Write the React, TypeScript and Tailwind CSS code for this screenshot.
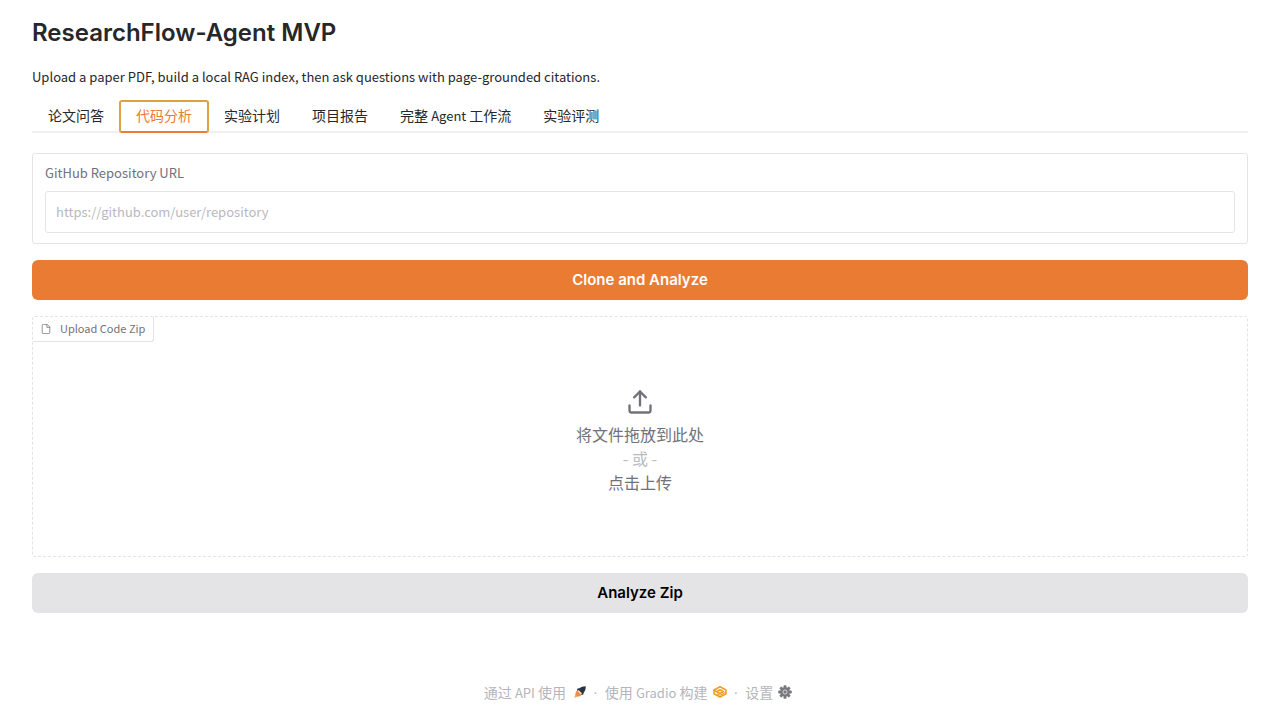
import React, { useState } from "react";

type Tab = { id: string; label: React.ReactNode };

const tabs: Tab[] = [
  { id: "qa", label: "论文问答" },
  { id: "code", label: "代码分析" },
  { id: "plan", label: "实验计划" },
  { id: "report", label: "项目报告" },
  {
    id: "workflow",
    label: (
      <>
        完整 <span className="text-[13px] leading-none">Agent</span> 工作流
      </>
    ),
  },
  { id: "eval", label: "实验评测" },
];

const FileIcon: React.FC = () => (
  <svg
    className="h-[10px] w-[10px]"
    viewBox="0 0 24 24"
    fill="none"
    stroke="currentColor"
    strokeWidth={1.8}
    strokeLinecap="round"
    strokeLinejoin="round"
  >
    <path d="M14 1H5a2 2 0 0 0-2 2v18a2 2 0 0 0 2 2h14a2 2 0 0 0 2-2V8z" />
    <path d="M14 1v7h7" />
  </svg>
);

const UploadIcon: React.FC = () => (
  <svg
    className="h-7 w-7"
    viewBox="0 0 24 24"
    fill="none"
    stroke="currentColor"
    strokeWidth={2}
    strokeLinecap="round"
    strokeLinejoin="round"
  >
    <path d="M21 15v4a2 2 0 0 1-2 2H5a2 2 0 0 1-2-2v-4" />
    <path d="M17 8l-5-5-5 5" />
    <path d="M12 3v12" />
  </svg>
);

const RocketIcon: React.FC = () => (
  <svg className="h-3 w-3" viewBox="0 0 24 24" fill="none">
    <path
      d="M23.500 0.500C18 0.500 13.500 2 11 4.500L7 5l-1 3.500 9.500 9.500 3-1 1-4c3-3 4-7 4-12.500z"
      fill="#283241"
    />
    <path d="M9.500 8.500L4 11l-3 12 12-3 2.500-5.500z" fill="#ee8a4c" />
    <path d="M9.500 8.500L7 10l7 7 1.500-2.500z" fill="#fbd9c4" />
    <path d="M1 23l1.500-6 4.500 4.500z" fill="#f6b45e" />
  </svg>
);

const GradioIcon: React.FC = () => (
  <svg
    className="h-[14px] w-[14px]"
    viewBox="0 0 28 28"
    fill="none"
    stroke="#f49b25"
    strokeWidth={3}
    strokeLinejoin="round"
  >
    <path d="M14 3.500L26 10v7.500L14 24 2 17.500V10z" />
    <path d="M2 10.500l12 6.500 7-3.800L14 9.500l-6 3.200" />
    <path d="M8 17.500l6 3 12-6.500" strokeWidth={2} />
  </svg>
);

const GearIcon: React.FC = () => (
  <svg className="h-[14px] w-[14px]" viewBox="0 0 24 24">
    <g fill="#77787c">
      {[0, 45, 90, 135].map((deg) => (
        <rect
          key={deg}
          x="9.500"
          y="0.500"
          width="5"
          height="23"
          rx="1"
          transform={`rotate(${deg} 12 12)`}
        />
      ))}
      <circle cx="12" cy="12" r="8" />
    </g>
    <circle cx="12" cy="12" r="3.500" fill="none" stroke="#dcdcde" strokeWidth={1.6} />
  </svg>
);

const App: React.FC = () => {
  const [active, setActive] = useState("code");
  const [url, setUrl] = useState("");

  return (
    <div className="flex min-h-screen flex-col bg-white px-8 font-['Noto_Sans_CJK_SC',sans-serif] text-sm text-[#27272a]">
      {/* Heading */}
      <h1 className="pt-4 font-['Inter',sans-serif] text-2xl leading-[34px] font-semibold">
        ResearchFlow-Agent MVP
      </h1>
      <p className="mt-4 text-[13px] leading-[21px]">
        Upload a paper PDF, build a local RAG index, then ask questions with
        page-grounded citations.
      </p>

      <main>
        {/* Tabs */}
        <div role="tablist" className="mt-[13px] flex border-b-2 border-[#f0f0f1]">
          {tabs.map((tab) => (
            <button
              key={tab.id}
              type="button"
              role="tab"
              aria-selected={active === tab.id}
              onClick={() => setActive(tab.id)}
              className={
                active === tab.id
                  ? "-mx-px -mb-[2px] h-[33px] rounded-[3px] border-2 border-[#dda13f] border-b-[#ed7a35] px-[15px] pb-[3px] text-[#ea7b33]"
                  : "h-[31px] px-4 pb-px"
              }
            >
              {tab.label}
            </button>
          ))}
        </div>

        <div className="mt-5 flex flex-col gap-4">
          {/* Repository */}
          <div className="rounded-[3px] border border-[#e4e4e7] px-3 pt-[9px] pb-[10px] text-[13px]">
            <label htmlFor="repo" className="mb-2 block leading-5 text-[#71717a]">
              GitHub Repository URL
            </label>
            <input
              id="repo"
              type="text"
              value={url}
              onChange={(e) => setUrl(e.target.value)}
              placeholder="https://github.com/user/repository"
              className="block h-[42px] w-full rounded-[3px] border border-[#e4e4e7] px-[10px] pb-[2px] placeholder:text-[#b8b8be]"
            />
          </div>
          <button
            type="button"
            className="h-10 w-full rounded-md bg-[#ea7b33] font-['Inter',sans-serif] text-[15px] font-semibold text-white"
          >
            Clone and Analyze
          </button>

          {/* Zip upload */}
          <div className="flex h-[241px] flex-col rounded-[3px] border border-dashed border-[#e4e4e7]">
            <div className="flex h-[25px] items-center gap-[9px] self-start rounded-br-[3px] border-r border-b border-[#e4e4e7] px-2 text-[11px] text-[#71717a]">
              <FileIcon />
              <span>Upload Code Zip</span>
            </div>
            <button
              type="button"
              className="flex flex-1 flex-col items-center pt-[46px] text-base leading-6 text-[#71717a]"
            >
              <UploadIcon />
              <span className="mt-[6px]">将文件拖放到此处</span>
              <span className="text-[#bbbbc2]">- 或 -</span>
              <span>点击上传</span>
            </button>
          </div>
          <button
            type="button"
            className="h-10 w-full rounded-md bg-[#e4e4e7] font-['Inter',sans-serif] text-[15px] font-semibold text-black"
          >
            Analyze Zip
          </button>
        </div>
      </main>

      {/* Footer */}
      <footer className="mt-auto flex items-center justify-center gap-[7px] pr-1 pb-[17px] leading-[22px] text-[#b5b5bb]">
        <a href="#api" className="flex items-center gap-2">
          <span>
            通过 <span className="text-[13px] leading-none">API</span> 使用
          </span>
          <RocketIcon />
        </a>
        <span className="font-['Liberation_Sans',sans-serif]">·</span>
        <a href="#gradio" className="flex items-center gap-[5px]">
          <span>
            使用 <span className="text-[13px] leading-none">Gradio</span> 构建
          </span>
          <GradioIcon />
        </a>
        <span className="font-['Liberation_Sans',sans-serif]">·</span>
        <a href="#settings" className="flex items-center gap-[5px]">
          设置 <GearIcon />
        </a>
      </footer>
    </div>
  );
};

export default App;
